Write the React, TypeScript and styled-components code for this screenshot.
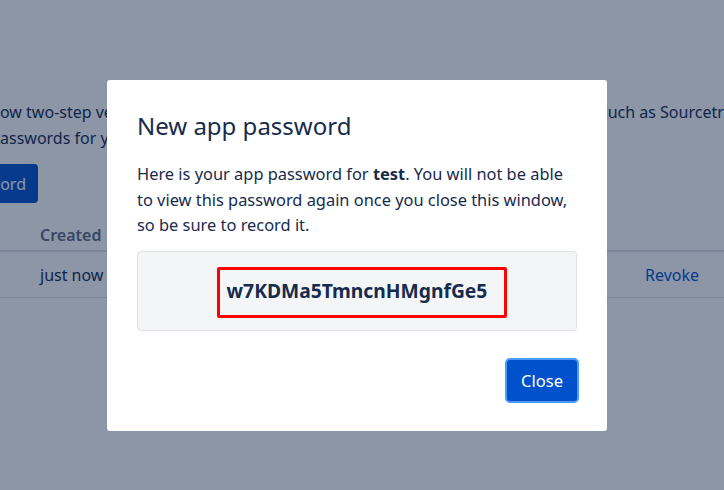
import React from "react";
import styled, { createGlobalStyle } from "styled-components";

const GlobalStyle = createGlobalStyle`
  html, body { margin: 0; padding: 0; background: #ffffff; }
  body {
    font-family: "Noto Sans", "Open Sans", "DejaVu Sans", sans-serif;
    color: #172b4d;
    overflow: hidden;
  }
  #root { width: 724px; height: 490px; overflow: hidden; }
`;

const Page = styled.div`
  width: 724px;
  height: 490px;
  display: flex;
  flex-direction: column;
  padding-top: 99px;
  box-sizing: border-box;
  font-size: 16px;
`;

const IntroLine = styled.div`
  display: grid;
  grid-template-columns: 107px 493px 1fr;
  height: 26px;
  line-height: 26px;
  white-space: nowrap;
  color: #172b4d;
`;

const Clip = styled.div`
  overflow: hidden;
`;

const ButtonRow = styled.div`
  margin-top: 13px;
  width: 38px;
  overflow: hidden;
  display: flex;
  justify-content: flex-end;
`;

const BgButton = styled.div`
  flex-shrink: 0;
  height: 39px;
  padding: 0 12px;
  display: flex;
  align-items: center;
  background: #0052cc;
  color: #ffffff;
  border-radius: 4px;
  white-space: nowrap;
`;

const TableHead = styled.div`
  margin-top: 17px;
  height: 30px;
  display: flex;
  align-items: center;
  padding-left: 40px;
  border-bottom: 2px solid #dfe1e6;
  color: #5e6c84;
  font-weight: 600;
`;

const TableRow = styled.div`
  height: 46px;
  display: grid;
  grid-template-columns: 605px 1fr;
  align-items: center;
  padding-left: 40px;
  padding-top: 1px;
  box-sizing: border-box;
  border-bottom: 1px solid #dfe1e6;
`;

const RevokeLink = styled.span`
  color: #0052cc;
`;

const Blanket = styled.div`
  position: fixed;
  inset: 0;
  background: rgba(9, 30, 66, 0.466);
  display: flex;
  justify-content: center;
  align-items: flex-start;
  padding: 80px 10px 0 0;
  box-sizing: border-box;
`;

const Modal = styled.div`
  width: 500px;
  height: 351px;
  box-sizing: border-box;
  background: #ffffff;
  border-radius: 3px;
  padding: 28px 30px 0 30px;
  display: flex;
  flex-direction: column;
`;

const Title = styled.h1`
  margin: 0;
  font-size: 24px;
  line-height: 36px;
  font-weight: 400;
  color: #172b4d;
`;

const Body = styled.p`
  margin: 17px 0 0 0;
  font-size: 16.4px;
  line-height: 25.6px;
  color: #172b4d;
`;

const PasswordBox = styled.div`
  margin-top: 13px;
  height: 80px;
  box-sizing: border-box;
  background: #f4f5f7;
  border: 1px solid #dfe1e6;
  border-radius: 4px;
  display: flex;
  align-items: center;
  justify-content: center;
`;

const Highlight = styled.div`
  width: 290px;
  height: 51px;
  margin: 3px 0 0 10px;
  padding: 0 10px 3px 0;
  box-sizing: border-box;
  border: 3px solid #ff0000;
  border-radius: 2px;
  display: flex;
  align-items: center;
  justify-content: center;
  font-size: 19.3px;
  font-weight: 700;
  color: #172b4d;
`;

const Footer = styled.div`
  margin-top: 27px;
  display: flex;
  justify-content: flex-end;
  margin-right: -2px;
`;

const CloseButton = styled.button`
  height: 45px;
  padding: 0 14px;
  font-family: inherit;
  font-size: 16.5px;
  color: #ffffff;
  background: #0052cc;
  border: 2px solid #4c9aff;
  border-radius: 5px;
  cursor: pointer;
`;

export default function App() {
  return (
    <>
      <GlobalStyle />
      <Page>
        <IntroLine>
          <span>ow two-step verification users</span>
          <span />
          <Clip>such as Sourcetree and Bitbucket</Clip>
        </IntroLine>
        <IntroLine>
          <span>asswords for you, and you won't</span>
          <span />
          <span />
        </IntroLine>
        <ButtonRow>
          <BgButton>Create app password</BgButton>
        </ButtonRow>
        <TableHead>Created</TableHead>
        <TableRow>
          <span>just now</span>
          <RevokeLink>Revoke</RevokeLink>
        </TableRow>
      </Page>
      <Blanket>
        <Modal>
          <Title>New app password</Title>
          <Body>
            Here is your app password for <strong>test</strong>. You will not be able
            to view this password again once you close this window, so be sure to
            record it.
          </Body>
          <PasswordBox>
            <Highlight>w7KDMa5TmncnHMgnfGe5</Highlight>
          </PasswordBox>
          <Footer>
            <CloseButton>Close</CloseButton>
          </Footer>
        </Modal>
      </Blanket>
    </>
  );
}
